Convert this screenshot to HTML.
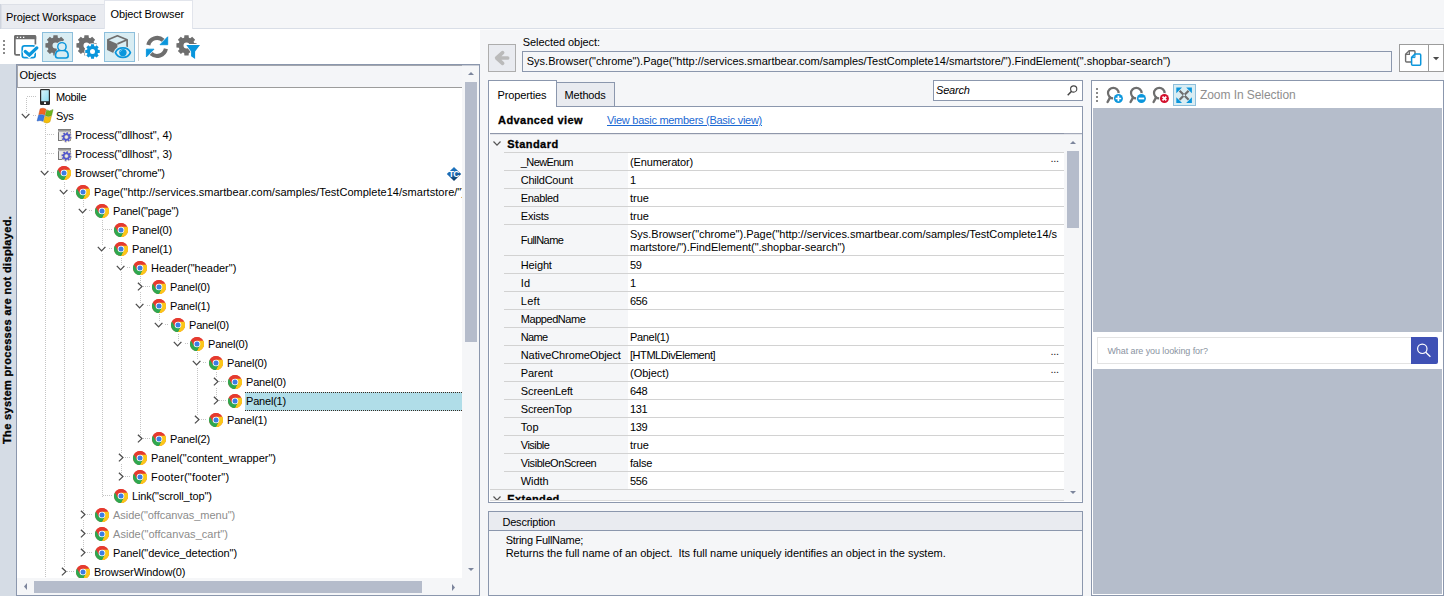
<!DOCTYPE html>
<html><head><meta charset="utf-8"><title>Object Browser</title><style>
html,body{margin:0;padding:0}
body{width:1444px;height:596px;overflow:hidden;background:#f5f6f8;font-family:"Liberation Sans", sans-serif;font-size:11px;color:#000;position:relative}
.a{position:absolute;box-sizing:border-box}
.t{position:absolute;white-space:pre}
svg{overflow:visible}
</style></head><body>
<div class="a" style="left:0px;top:28px;width:1444px;height:1px;background:#d9dee7;"></div>
<div class="a" style="left:480px;top:29px;width:964px;height:1px;background:#fcfcfd;"></div>
<div class="a" style="left:0px;top:29px;width:480px;height:35px;background:#fff;"></div>
<div class="a" style="left:1px;top:4px;width:104px;height:24px;background:#e9ebf0;border:1px solid #dde0e7;border-bottom:none;"></div>
<div class="a" style="left:104px;top:0px;width:89px;height:29px;background:#fff;border:1px solid #e2e5ec;border-bottom:none;"></div>
<div class="a" style="left:0px;top:4px;width:1px;height:25px;background:#cfd4de;"></div>
<span class="t" style="left:6px;top:11px;font-size:11px;line-height:13px;letter-spacing:-0.124px;">Project Workspace</span>
<span class="t" style="left:110.6px;top:8px;font-size:11px;line-height:13px;letter-spacing:-0.129px;">Object Browser</span>
<div class="a" style="left:3px;top:40px;width:2px;height:2px;background:#8a8a8a;"></div>
<div class="a" style="left:3px;top:44px;width:2px;height:2px;background:#8a8a8a;"></div>
<div class="a" style="left:3px;top:48px;width:2px;height:2px;background:#8a8a8a;"></div>
<div class="a" style="left:3px;top:52px;width:2px;height:2px;background:#8a8a8a;"></div>
<div class="a" style="left:42px;top:32px;width:31px;height:30px;background:#d9edf3;border:1px solid #8dbfdc;"></div>
<div class="a" style="left:104px;top:32px;width:31px;height:30px;background:#d9edf3;border:1px solid #8dbfdc;"></div>
<div class="a" style="left:138px;top:33px;width:1px;height:28px;background:#d0d0d0;"></div>
<svg class="a" style="left:14px;top:35px;" width="24" height="24" viewBox="0 0 24 24">
<path d="M0.85 19 V1.8 Q0.85 0.85 1.8 0.85 H20.4 Q21.4 0.85 21.4 1.8 V9.4" fill="none" stroke="#6e6e6e" stroke-width="1.7"/>
<path d="M0.2 1.6 Q0.2 0 1.8 0 H20.6 Q22.2 0 22.2 1.6 V4.2 H0.2Z" fill="#6e6e6e"/>
<rect x="2.8" y="1.7" width="1.3" height="1.3" fill="#fff"/><rect x="5.9" y="1.7" width="1.3" height="1.3" fill="#fff"/><rect x="9" y="1.7" width="1.3" height="1.3" fill="#fff"/>
<path d="M0.85 18.5 Q0.85 19.85 2.2 19.85 H6" stroke="#6e6e6e" stroke-width="1.7" fill="none"/>
<rect x="8.25" y="10.95" width="12.9" height="11.7" rx="2.2" fill="#fff" stroke="#0a96dc" stroke-width="1.7"/>
<path d="M11.3 16.6 L15.3 20 L22.8 12.9" fill="none" stroke="#fff" stroke-width="5.4" stroke-linecap="round"/>
<path d="M11.3 16.6 L15.3 20 L22.8 12.9" fill="none" stroke="#0a96dc" stroke-width="3.3" stroke-linecap="round" stroke-linejoin="miter"/>
</svg>
<svg class="a" style="left:45px;top:35px;" width="24" height="24" viewBox="0 0 24 24">
<path d="M12.85 18.05 L12.60 20.48 L8.40 20.48 L8.15 18.05 L6.75 17.47 L4.85 19.02 L1.88 16.05 L3.43 14.15 L2.85 12.75 L0.42 12.50 L0.42 8.30 L2.85 8.05 L3.43 6.65 L1.88 4.75 L4.85 1.78 L6.75 3.33 L8.15 2.75 L8.40 0.32 L12.60 0.32 L12.85 2.75 L14.25 3.33 L16.15 1.78 L19.12 4.75 L17.57 6.65 L18.15 8.05 L20.58 8.30 L20.58 12.50 L18.15 12.75 L17.57 14.15 L19.12 16.05 L16.15 19.02 L14.25 17.47Z M13.50 10.40 A3.0 3.0 0 1 0 7.50 10.40 A3.0 3.0 0 1 0 13.50 10.40Z" fill="#6e6e6e" fill-rule="evenodd"/>
<circle cx="16.95" cy="11.8" r="5.9" fill="#d9edf3"/>
<path d="M9.6 23.6 V20 Q9.6 14.4 15 14.4 H18.9 Q24.3 14.4 24.3 20 V23.6Z" fill="#d9edf3"/>
<circle cx="16.95" cy="11.8" r="4.1" fill="#d9edf3" stroke="#0a96dc" stroke-width="1.6"/>
<path d="M10.5 20.6 Q10.5 15.4 15.6 15.4 H18.1 Q23.2 15.4 23.2 20.6 Q23.2 23 20.8 23 H12.9 Q10.5 23 10.5 20.6Z" fill="#d9edf3" stroke="#0a96dc" stroke-width="1.6"/>
<circle cx="16.95" cy="11.8" r="3.3" fill="#d9edf3"/>
</svg>
<svg class="a" style="left:76px;top:35px;" width="24" height="24" viewBox="0 0 24 24">
<path d="M12.85 18.05 L12.60 20.48 L8.40 20.48 L8.15 18.05 L6.75 17.47 L4.85 19.02 L1.88 16.05 L3.43 14.15 L2.85 12.75 L0.42 12.50 L0.42 8.30 L2.85 8.05 L3.43 6.65 L1.88 4.75 L4.85 1.78 L6.75 3.33 L8.15 2.75 L8.40 0.32 L12.60 0.32 L12.85 2.75 L14.25 3.33 L16.15 1.78 L19.12 4.75 L17.57 6.65 L18.15 8.05 L20.58 8.30 L20.58 12.50 L18.15 12.75 L17.57 14.15 L19.12 16.05 L16.15 19.02 L14.25 17.47Z M13.50 10.40 A3.0 3.0 0 1 0 7.50 10.40 A3.0 3.0 0 1 0 13.50 10.40Z" fill="#6e6e6e" fill-rule="evenodd"/>
<circle cx="16.5" cy="16.4" r="8.2" fill="#fff"/>
<path d="M18.15 21.86 L18.00 23.65 L15.00 23.65 L14.85 21.86 L13.81 21.42 L12.44 22.58 L10.32 20.46 L11.48 19.09 L11.04 18.05 L9.25 17.90 L9.25 14.90 L11.04 14.75 L11.48 13.71 L10.32 12.34 L12.44 10.22 L13.81 11.38 L14.85 10.94 L15.00 9.15 L18.00 9.15 L18.15 10.94 L19.19 11.38 L20.56 10.22 L22.68 12.34 L21.52 13.71 L21.96 14.75 L23.75 14.90 L23.75 17.90 L21.96 18.05 L21.52 19.09 L22.68 20.46 L20.56 22.58 L19.19 21.42Z M19.00 16.40 A2.5 2.5 0 1 0 14.00 16.40 A2.5 2.5 0 1 0 19.00 16.40Z" fill="#0a96dc" fill-rule="evenodd"/>
</svg>
<svg class="a" style="left:107px;top:35px;" width="24" height="24" viewBox="0 0 24 24">
<path d="M0.9 4.8 L10.4 0.8 L20.1 4.8 V14.6 L10.4 19 L0.9 14.6Z" fill="none" stroke="#6e6e6e" stroke-width="1.7" stroke-linejoin="round"/>
<path d="M0.9 4.8 L10.4 8.9 V19 L0.9 14.6Z" fill="#6e6e6e"/>
<path d="M10.4 8.9 L20.1 4.8" stroke="#6e6e6e" stroke-width="1.7" fill="none"/>
<path d="M7.4 17.6 C10.4 10.2 21.4 10.2 24.4 17.6 C21.4 25 10.4 25 7.4 17.6Z" fill="#d9edf3" stroke="#d9edf3" stroke-width="2.2" stroke-linejoin="round"/>
<path d="M8.4 17.6 C11 11.3 20.8 11.3 23.4 17.6 C20.8 23.9 11 23.9 8.4 17.6Z" fill="#d9edf3" stroke="#0a96dc" stroke-width="1.7" stroke-linejoin="round"/>
<circle cx="15.9" cy="17.6" r="3.7" fill="#0a96dc"/>
<path d="M13.3 16.8 A2.8 2.8 0 0 1 15.4 14.8" fill="none" stroke="#7fcbf1" stroke-width="0.8"/>
</svg>
<svg class="a" style="left:145px;top:35px;" width="24" height="24" viewBox="0 0 24 24">
<path d="M3.3 10.03 A9 9 0 0 1 18.12 5.21" fill="none" stroke="#6e6e6e" stroke-width="4.1"/>
<path d="M20.9 13.77 A9 9 0 0 1 6.08 18.59" fill="none" stroke="#6e6e6e" stroke-width="4.1"/>
<path d="M22.7 1.8 V9.7 H15Z" fill="#0a96dc" stroke="#0a96dc" stroke-width="0.9" stroke-linejoin="round"/>
<path d="M1.4 21.9 V14.2 H9Z" fill="#0a96dc" stroke="#0a96dc" stroke-width="0.9" stroke-linejoin="round"/>
</svg>
<svg class="a" style="left:176px;top:35px;" width="24" height="24" viewBox="0 0 24 24">
<path d="M12.85 18.05 L12.60 20.48 L8.40 20.48 L8.15 18.05 L6.75 17.47 L4.85 19.02 L1.88 16.05 L3.43 14.15 L2.85 12.75 L0.42 12.50 L0.42 8.30 L2.85 8.05 L3.43 6.65 L1.88 4.75 L4.85 1.78 L6.75 3.33 L8.15 2.75 L8.40 0.32 L12.60 0.32 L12.85 2.75 L14.25 3.33 L16.15 1.78 L19.12 4.75 L17.57 6.65 L18.15 8.05 L20.58 8.30 L20.58 12.50 L18.15 12.75 L17.57 14.15 L19.12 16.05 L16.15 19.02 L14.25 17.47Z M13.50 10.40 A3.0 3.0 0 1 0 7.50 10.40 A3.0 3.0 0 1 0 13.50 10.40Z" fill="#6e6e6e" fill-rule="evenodd"/>
<path d="M8.6 8.9 H26 L20.2 17 V25.6 L14.2 21.4 V16.6Z" fill="#fff"/>
<path d="M10.3 9.9 H24 L19.1 16.4 V23.9 L15.1 21.2 V16.4Z" fill="#0a96dc"/>
</svg>
<div class="a" style="left:0px;top:64px;width:16px;height:532px;background:#d5dce5;"></div>
<div class="a" style="left:0;top:0;width:0;height:0"><span class="t" id="vt" style="left:0;top:0;font-weight:bold;-webkit-text-stroke:0.3px #000;font-size:11px;line-height:13px;transform-origin:0 0;transform:translate(0.6px,444px) rotate(-90deg);letter-spacing:0.35px">The system processes are not displayed.</span></div>
<div class="a" style="left:16px;top:64px;width:464px;height:532px;background:#fff;border:1px solid #8b97ad;"></div>
<div class="a" style="left:17px;top:65px;width:445px;height:23px;background:#f4f5f8;border:1px solid #a3a6ad;border-right:none;border-bottom:1px solid #9c9c9c;"></div>
<div class="a" style="left:462px;top:65px;width:17px;height:530px;background:#f5f6f8;"></div>
<div class="a" style="left:462px;top:65px;width:17px;height:1px;background:#c9cdd6;"></div>
<div class="a" style="left:17px;top:578px;width:445px;height:17px;background:#f5f6f8;"></div>
<span class="t" style="left:19.6px;top:69px;font-size:11px;line-height:13px;letter-spacing:-0.100px;">Objects</span>
<div class="a" style="left:465px;top:82px;width:12px;height:260px;background:#b5bccb;"></div>
<div class="a" style="left:34px;top:581px;width:388px;height:12px;background:#b5bccb;"></div>
<svg class="a" style="left:468px;top:72px;" width="6" height="3" viewBox="0 0 6 3"><path d="M0 3 L3 0 L6 3Z" fill="#7c859c"/></svg>
<svg class="a" style="left:468px;top:568px;" width="6" height="3" viewBox="0 0 6 3"><path d="M0 0 L3 3 L6 0Z" fill="#7c859c"/></svg>
<svg class="a" style="left:24px;top:583px;" width="3" height="7" viewBox="0 0 3 7"><path d="M3 0 L0 3.5 L3 7Z" fill="#7c859c"/></svg>
<svg class="a" style="left:452px;top:584px;" width="3" height="7" viewBox="0 0 3 7"><path d="M0 0 L3 3.5 L0 7Z" fill="#7c859c"/></svg>
<div class="a" style="left:17px;top:88px;width:445px;height:490px;overflow:hidden;background:#fff"><div class="a" style="left:-17px;top:-88px;width:0;height:0">
<div class="a" style="left:26px;top:98px;width:1px;height:19px;background:repeating-linear-gradient(to bottom,#c4c4c4 0 1px,transparent 1px 2px);"></div>
<div class="a" style="left:45px;top:124px;width:1px;height:454px;background:repeating-linear-gradient(to bottom,#c4c4c4 0 1px,transparent 1px 2px);"></div>
<div class="a" style="left:64px;top:182px;width:1px;height:391px;background:repeating-linear-gradient(to bottom,#c4c4c4 0 1px,transparent 1px 2px);"></div>
<div class="a" style="left:83px;top:200px;width:1px;height:354px;background:repeating-linear-gradient(to bottom,#c4c4c4 0 1px,transparent 1px 2px);"></div>
<div class="a" style="left:102px;top:220px;width:1px;height:277px;background:repeating-linear-gradient(to bottom,#c4c4c4 0 1px,transparent 1px 2px);"></div>
<div class="a" style="left:121px;top:258px;width:1px;height:220px;background:repeating-linear-gradient(to bottom,#c4c4c4 0 1px,transparent 1px 2px);"></div>
<div class="a" style="left:140px;top:276px;width:1px;height:164px;background:repeating-linear-gradient(to bottom,#c4c4c4 0 1px,transparent 1px 2px);"></div>
<div class="a" style="left:159px;top:314px;width:1px;height:12px;background:repeating-linear-gradient(to bottom,#c4c4c4 0 1px,transparent 1px 2px);"></div>
<div class="a" style="left:178px;top:334px;width:1px;height:11px;background:repeating-linear-gradient(to bottom,#c4c4c4 0 1px,transparent 1px 2px);"></div>
<div class="a" style="left:197px;top:352px;width:1px;height:69px;background:repeating-linear-gradient(to bottom,#c4c4c4 0 1px,transparent 1px 2px);"></div>
<div class="a" style="left:216px;top:372px;width:1px;height:30px;background:repeating-linear-gradient(to bottom,#c4c4c4 0 1px,transparent 1px 2px);"></div>
<div class="a" style="left:27px;top:96px;width:9px;height:1px;background:repeating-linear-gradient(to right,#c4c4c4 0 1px,transparent 1px 2px);"></div>
<svg class="a" style="left:40px;top:89px;" width="10" height="16" viewBox="0 0 10 16"><defs><linearGradient id="mg" x1="0" y1="0" x2="1" y2="1"><stop offset="0" stop-color="#d9f4fb"/><stop offset="1" stop-color="#8fdcf0"/></linearGradient></defs>
<rect x="0" y="0" width="10" height="16" rx="1.2" fill="#2b2b2b"/><rect x="1.2" y="1.2" width="7.6" height="11" fill="url(#mg)"/><rect x="4" y="13.2" width="2" height="1.8" fill="#fff"/></svg>
<span class="t" style="left:56px;top:91px;font-size:11px;line-height:13px;letter-spacing:-0.368px;">Mobile</span>
<div class="a" style="left:33px;top:115px;width:3px;height:1px;background:repeating-linear-gradient(to right,#c4c4c4 0 1px,transparent 1px 2px);"></div>
<div class="a" style="left:22px;top:113px;width:9px;height:7px;background:#fff;"></div>
<svg class="a" style="left:21px;top:113px;" width="10" height="7" viewBox="0 0 10 7"><path d="M0.8 0.9 L4.6 4.9 L8.4 0.9" fill="none" stroke="#4d4d4d" stroke-width="1.3"/></svg>
<svg class="a" style="left:37px;top:108px;" width="16" height="16" viewBox="0 0 16 16"><path d="M3.2 0.8 Q6 -0.6 9 1.2 L7.7 6.9 Q5 5.4 1.8 6.6Z" fill="#f26522" stroke="#c9481a" stroke-width="0.5"/>
<path d="M9.7 1.9 Q12.6 4 16 1.6 L14.6 7.4 Q11.4 9.6 8.3 7.5Z" fill="#6fb51e" stroke="#4f8a12" stroke-width="0.5"/>
<path d="M1.6 7.2 Q4.6 6 7.5 7.5 L6.1 13.3 Q3.2 11.8 0.1 13Z" fill="#3a78e0" stroke="#2a59b5" stroke-width="0.5"/>
<path d="M8.1 8.2 Q11 10.3 14.4 8 L13 13.8 Q10 16.2 6.7 14.1Z" fill="#f5bf0c" stroke="#c79606" stroke-width="0.5"/></svg>
<span class="t" style="left:56px;top:110px;font-size:11px;line-height:13px;letter-spacing:-0.315px;">Sys</span>
<div class="a" style="left:45px;top:134px;width:10px;height:1px;background:repeating-linear-gradient(to right,#c4c4c4 0 1px,transparent 1px 2px);"></div>
<svg class="a" style="left:58px;top:129px;" width="15" height="14" viewBox="0 0 15 14"><defs><linearGradient id="pg2" x1="0" y1="0" x2="0" y2="1"><stop offset="0" stop-color="#6f6f6f"/><stop offset="1" stop-color="#c8c8c8"/></linearGradient></defs>
<rect x="0.5" y="0.5" width="12" height="11" fill="#e9e9e9" stroke="#777"/><rect x="0" y="0" width="13" height="3.2" fill="url(#pg2)"/>
<path d="M12.28 7.56 L13.80 8.07 L13.40 10.03 L11.80 9.91 L11.45 10.43 L12.17 11.87 L10.50 12.98 L9.45 11.76 L8.84 11.88 L8.33 13.40 L6.37 13.00 L6.49 11.40 L5.97 11.05 L4.53 11.77 L3.42 10.10 L4.64 9.05 L4.52 8.44 L3.00 7.93 L3.40 5.97 L5.00 6.09 L5.35 5.57 L4.63 4.13 L6.30 3.02 L7.35 4.24 L7.96 4.12 L8.47 2.60 L10.43 3.00 L10.31 4.60 L10.83 4.95 L12.27 4.23 L13.38 5.90 L12.16 6.95Z M9.90 8.00 A1.5 1.5 0 1 0 6.90 8.00 A1.5 1.5 0 1 0 9.90 8.00Z" fill="#5358cd" stroke="#f6ecc0" stroke-width="0.7" fill-rule="evenodd"/></svg>
<span class="t" style="left:75px;top:129px;font-size:11px;line-height:13px;letter-spacing:-0.091px;">Process(&quot;dllhost&quot;, 4)</span>
<div class="a" style="left:45px;top:153px;width:10px;height:1px;background:repeating-linear-gradient(to right,#c4c4c4 0 1px,transparent 1px 2px);"></div>
<svg class="a" style="left:58px;top:148px;" width="15" height="14" viewBox="0 0 15 14"><defs><linearGradient id="pg3" x1="0" y1="0" x2="0" y2="1"><stop offset="0" stop-color="#6f6f6f"/><stop offset="1" stop-color="#c8c8c8"/></linearGradient></defs>
<rect x="0.5" y="0.5" width="12" height="11" fill="#e9e9e9" stroke="#777"/><rect x="0" y="0" width="13" height="3.2" fill="url(#pg3)"/>
<path d="M12.28 7.56 L13.80 8.07 L13.40 10.03 L11.80 9.91 L11.45 10.43 L12.17 11.87 L10.50 12.98 L9.45 11.76 L8.84 11.88 L8.33 13.40 L6.37 13.00 L6.49 11.40 L5.97 11.05 L4.53 11.77 L3.42 10.10 L4.64 9.05 L4.52 8.44 L3.00 7.93 L3.40 5.97 L5.00 6.09 L5.35 5.57 L4.63 4.13 L6.30 3.02 L7.35 4.24 L7.96 4.12 L8.47 2.60 L10.43 3.00 L10.31 4.60 L10.83 4.95 L12.27 4.23 L13.38 5.90 L12.16 6.95Z M9.90 8.00 A1.5 1.5 0 1 0 6.90 8.00 A1.5 1.5 0 1 0 9.90 8.00Z" fill="#5358cd" stroke="#f6ecc0" stroke-width="0.7" fill-rule="evenodd"/></svg>
<span class="t" style="left:75px;top:148px;font-size:11px;line-height:13px;letter-spacing:-0.091px;">Process(&quot;dllhost&quot;, 3)</span>
<div class="a" style="left:51px;top:172px;width:4px;height:1px;background:repeating-linear-gradient(to right,#c4c4c4 0 1px,transparent 1px 2px);"></div>
<div class="a" style="left:41px;top:170px;width:9px;height:7px;background:#fff;"></div>
<svg class="a" style="left:40px;top:170px;" width="10" height="7" viewBox="0 0 10 7"><path d="M0.8 0.9 L4.6 4.9 L8.4 0.9" fill="none" stroke="#4d4d4d" stroke-width="1.3"/></svg>
<svg class="a" style="left:57px;top:166px;" width="14" height="14" viewBox="0 0 14 14"><use href="#chr"/></svg>
<span class="t" style="left:75px;top:167px;font-size:11px;line-height:13px;letter-spacing:-0.140px;">Browser(&quot;chrome&quot;)</span>
<div class="a" style="left:71px;top:191px;width:3px;height:1px;background:repeating-linear-gradient(to right,#c4c4c4 0 1px,transparent 1px 2px);"></div>
<div class="a" style="left:60px;top:189px;width:9px;height:7px;background:#fff;"></div>
<svg class="a" style="left:59px;top:189px;" width="10" height="7" viewBox="0 0 10 7"><path d="M0.8 0.9 L4.6 4.9 L8.4 0.9" fill="none" stroke="#4d4d4d" stroke-width="1.3"/></svg>
<svg class="a" style="left:76px;top:185px;" width="14" height="14" viewBox="0 0 14 14"><use href="#chr"/></svg>
<span class="t" style="left:94px;top:186px;font-size:11px;line-height:13px;letter-spacing:0.026px;">Page(&quot;http://services.smartbear.com/samples/TestComplete14/smartstore/&quot;)</span>
<div class="a" style="left:89px;top:210px;width:4px;height:1px;background:repeating-linear-gradient(to right,#c4c4c4 0 1px,transparent 1px 2px);"></div>
<div class="a" style="left:79px;top:208px;width:9px;height:7px;background:#fff;"></div>
<svg class="a" style="left:78px;top:208px;" width="10" height="7" viewBox="0 0 10 7"><path d="M0.8 0.9 L4.6 4.9 L8.4 0.9" fill="none" stroke="#4d4d4d" stroke-width="1.3"/></svg>
<svg class="a" style="left:95px;top:204px;" width="14" height="14" viewBox="0 0 14 14"><use href="#chr"/></svg>
<span class="t" style="left:113px;top:205px;font-size:11px;line-height:13px;letter-spacing:-0.150px;">Panel(&quot;page&quot;)</span>
<div class="a" style="left:103px;top:229px;width:9px;height:1px;background:repeating-linear-gradient(to right,#c4c4c4 0 1px,transparent 1px 2px);"></div>
<svg class="a" style="left:114px;top:223px;" width="14" height="14" viewBox="0 0 14 14"><use href="#chr"/></svg>
<span class="t" style="left:132px;top:224px;font-size:11px;line-height:13px;letter-spacing:-0.197px;">Panel(0)</span>
<div class="a" style="left:109px;top:248px;width:3px;height:1px;background:repeating-linear-gradient(to right,#c4c4c4 0 1px,transparent 1px 2px);"></div>
<div class="a" style="left:98px;top:246px;width:9px;height:7px;background:#fff;"></div>
<svg class="a" style="left:97px;top:246px;" width="10" height="7" viewBox="0 0 10 7"><path d="M0.8 0.9 L4.6 4.9 L8.4 0.9" fill="none" stroke="#4d4d4d" stroke-width="1.3"/></svg>
<svg class="a" style="left:114px;top:242px;" width="14" height="14" viewBox="0 0 14 14"><use href="#chr"/></svg>
<span class="t" style="left:132px;top:243px;font-size:11px;line-height:13px;letter-spacing:-0.197px;">Panel(1)</span>
<div class="a" style="left:127px;top:267px;width:4px;height:1px;background:repeating-linear-gradient(to right,#c4c4c4 0 1px,transparent 1px 2px);"></div>
<div class="a" style="left:117px;top:265px;width:9px;height:7px;background:#fff;"></div>
<svg class="a" style="left:116px;top:265px;" width="10" height="7" viewBox="0 0 10 7"><path d="M0.8 0.9 L4.6 4.9 L8.4 0.9" fill="none" stroke="#4d4d4d" stroke-width="1.3"/></svg>
<svg class="a" style="left:133px;top:261px;" width="14" height="14" viewBox="0 0 14 14"><use href="#chr"/></svg>
<span class="t" style="left:151px;top:262px;font-size:11px;line-height:13px;letter-spacing:-0.011px;">Header(&quot;header&quot;)</span>
<div class="a" style="left:143px;top:286px;width:7px;height:1px;background:repeating-linear-gradient(to right,#c4c4c4 0 1px,transparent 1px 2px);"></div>
<div class="a" style="left:137px;top:283px;width:6px;height:9px;background:#fff;"></div>
<svg class="a" style="left:137px;top:282px;" width="7" height="10" viewBox="0 0 7 10"><path d="M0.9 0.8 L4.9 4.6 L0.9 8.4" fill="none" stroke="#4d4d4d" stroke-width="1.3"/></svg>
<svg class="a" style="left:152px;top:280px;" width="14" height="14" viewBox="0 0 14 14"><use href="#chr"/></svg>
<span class="t" style="left:170px;top:281px;font-size:11px;line-height:13px;letter-spacing:-0.197px;">Panel(0)</span>
<div class="a" style="left:147px;top:305px;width:3px;height:1px;background:repeating-linear-gradient(to right,#c4c4c4 0 1px,transparent 1px 2px);"></div>
<div class="a" style="left:136px;top:303px;width:9px;height:7px;background:#fff;"></div>
<svg class="a" style="left:135px;top:303px;" width="10" height="7" viewBox="0 0 10 7"><path d="M0.8 0.9 L4.6 4.9 L8.4 0.9" fill="none" stroke="#4d4d4d" stroke-width="1.3"/></svg>
<svg class="a" style="left:152px;top:299px;" width="14" height="14" viewBox="0 0 14 14"><use href="#chr"/></svg>
<span class="t" style="left:170px;top:300px;font-size:11px;line-height:13px;letter-spacing:-0.197px;">Panel(1)</span>
<div class="a" style="left:165px;top:324px;width:4px;height:1px;background:repeating-linear-gradient(to right,#c4c4c4 0 1px,transparent 1px 2px);"></div>
<div class="a" style="left:155px;top:322px;width:9px;height:7px;background:#fff;"></div>
<svg class="a" style="left:154px;top:322px;" width="10" height="7" viewBox="0 0 10 7"><path d="M0.8 0.9 L4.6 4.9 L8.4 0.9" fill="none" stroke="#4d4d4d" stroke-width="1.3"/></svg>
<svg class="a" style="left:171px;top:318px;" width="14" height="14" viewBox="0 0 14 14"><use href="#chr"/></svg>
<span class="t" style="left:189px;top:319px;font-size:11px;line-height:13px;letter-spacing:-0.197px;">Panel(0)</span>
<div class="a" style="left:185px;top:343px;width:3px;height:1px;background:repeating-linear-gradient(to right,#c4c4c4 0 1px,transparent 1px 2px);"></div>
<div class="a" style="left:174px;top:341px;width:9px;height:7px;background:#fff;"></div>
<svg class="a" style="left:173px;top:341px;" width="10" height="7" viewBox="0 0 10 7"><path d="M0.8 0.9 L4.6 4.9 L8.4 0.9" fill="none" stroke="#4d4d4d" stroke-width="1.3"/></svg>
<svg class="a" style="left:190px;top:337px;" width="14" height="14" viewBox="0 0 14 14"><use href="#chr"/></svg>
<span class="t" style="left:208px;top:338px;font-size:11px;line-height:13px;letter-spacing:-0.197px;">Panel(0)</span>
<div class="a" style="left:203px;top:362px;width:4px;height:1px;background:repeating-linear-gradient(to right,#c4c4c4 0 1px,transparent 1px 2px);"></div>
<div class="a" style="left:193px;top:360px;width:9px;height:7px;background:#fff;"></div>
<svg class="a" style="left:192px;top:360px;" width="10" height="7" viewBox="0 0 10 7"><path d="M0.8 0.9 L4.6 4.9 L8.4 0.9" fill="none" stroke="#4d4d4d" stroke-width="1.3"/></svg>
<svg class="a" style="left:209px;top:356px;" width="14" height="14" viewBox="0 0 14 14"><use href="#chr"/></svg>
<span class="t" style="left:227px;top:357px;font-size:11px;line-height:13px;letter-spacing:-0.197px;">Panel(0)</span>
<div class="a" style="left:219px;top:381px;width:7px;height:1px;background:repeating-linear-gradient(to right,#c4c4c4 0 1px,transparent 1px 2px);"></div>
<div class="a" style="left:213px;top:378px;width:6px;height:9px;background:#fff;"></div>
<svg class="a" style="left:213px;top:377px;" width="7" height="10" viewBox="0 0 7 10"><path d="M0.9 0.8 L4.9 4.6 L0.9 8.4" fill="none" stroke="#4d4d4d" stroke-width="1.3"/></svg>
<svg class="a" style="left:228px;top:375px;" width="14" height="14" viewBox="0 0 14 14"><use href="#chr"/></svg>
<span class="t" style="left:246px;top:376px;font-size:11px;line-height:13px;letter-spacing:-0.197px;">Panel(0)</span>
<div class="a" style="left:219px;top:400px;width:7px;height:1px;background:repeating-linear-gradient(to right,#c4c4c4 0 1px,transparent 1px 2px);"></div>
<div class="a" style="left:213px;top:397px;width:6px;height:9px;background:#fff;"></div>
<svg class="a" style="left:213px;top:396px;" width="7" height="10" viewBox="0 0 7 10"><path d="M0.9 0.8 L4.9 4.6 L0.9 8.4" fill="none" stroke="#4d4d4d" stroke-width="1.3"/></svg>
<svg class="a" style="left:228px;top:394px;" width="14" height="14" viewBox="0 0 14 14"><use href="#chr"/></svg>
<div class="a" style="left:245px;top:392px;width:217px;height:19px;background:#b0dde8;border-top:1px dotted #3b2a20;border-bottom:1px dotted #3b2a20;"></div>
<span class="t" style="left:246px;top:395px;font-size:11px;line-height:13px;letter-spacing:-0.197px;">Panel(1)</span>
<div class="a" style="left:201px;top:419px;width:6px;height:1px;background:repeating-linear-gradient(to right,#c4c4c4 0 1px,transparent 1px 2px);"></div>
<div class="a" style="left:194px;top:416px;width:6px;height:9px;background:#fff;"></div>
<svg class="a" style="left:194px;top:415px;" width="7" height="10" viewBox="0 0 7 10"><path d="M0.9 0.8 L4.9 4.6 L0.9 8.4" fill="none" stroke="#4d4d4d" stroke-width="1.3"/></svg>
<svg class="a" style="left:209px;top:413px;" width="14" height="14" viewBox="0 0 14 14"><use href="#chr"/></svg>
<span class="t" style="left:227px;top:414px;font-size:11px;line-height:13px;letter-spacing:-0.197px;">Panel(1)</span>
<div class="a" style="left:143px;top:438px;width:7px;height:1px;background:repeating-linear-gradient(to right,#c4c4c4 0 1px,transparent 1px 2px);"></div>
<div class="a" style="left:137px;top:435px;width:6px;height:9px;background:#fff;"></div>
<svg class="a" style="left:137px;top:434px;" width="7" height="10" viewBox="0 0 7 10"><path d="M0.9 0.8 L4.9 4.6 L0.9 8.4" fill="none" stroke="#4d4d4d" stroke-width="1.3"/></svg>
<svg class="a" style="left:152px;top:432px;" width="14" height="14" viewBox="0 0 14 14"><use href="#chr"/></svg>
<span class="t" style="left:170px;top:433px;font-size:11px;line-height:13px;letter-spacing:-0.197px;">Panel(2)</span>
<div class="a" style="left:125px;top:457px;width:6px;height:1px;background:repeating-linear-gradient(to right,#c4c4c4 0 1px,transparent 1px 2px);"></div>
<div class="a" style="left:118px;top:454px;width:6px;height:9px;background:#fff;"></div>
<svg class="a" style="left:118px;top:453px;" width="7" height="10" viewBox="0 0 7 10"><path d="M0.9 0.8 L4.9 4.6 L0.9 8.4" fill="none" stroke="#4d4d4d" stroke-width="1.3"/></svg>
<svg class="a" style="left:133px;top:451px;" width="14" height="14" viewBox="0 0 14 14"><use href="#chr"/></svg>
<span class="t" style="left:151px;top:452px;font-size:11px;line-height:13px;letter-spacing:-0.009px;">Panel(&quot;content_wrapper&quot;)</span>
<div class="a" style="left:125px;top:476px;width:6px;height:1px;background:repeating-linear-gradient(to right,#c4c4c4 0 1px,transparent 1px 2px);"></div>
<div class="a" style="left:118px;top:473px;width:6px;height:9px;background:#fff;"></div>
<svg class="a" style="left:118px;top:472px;" width="7" height="10" viewBox="0 0 7 10"><path d="M0.9 0.8 L4.9 4.6 L0.9 8.4" fill="none" stroke="#4d4d4d" stroke-width="1.3"/></svg>
<svg class="a" style="left:133px;top:470px;" width="14" height="14" viewBox="0 0 14 14"><use href="#chr"/></svg>
<span class="t" style="left:151px;top:471px;font-size:11px;line-height:13px;letter-spacing:0.202px;">Footer(&quot;footer&quot;)</span>
<div class="a" style="left:103px;top:495px;width:9px;height:1px;background:repeating-linear-gradient(to right,#c4c4c4 0 1px,transparent 1px 2px);"></div>
<svg class="a" style="left:114px;top:489px;" width="14" height="14" viewBox="0 0 14 14"><use href="#chr"/></svg>
<span class="t" style="left:132px;top:490px;font-size:11px;line-height:13px;letter-spacing:-0.150px;">Link(&quot;scroll_top&quot;)</span>
<div class="a" style="left:87px;top:514px;width:6px;height:1px;background:repeating-linear-gradient(to right,#c4c4c4 0 1px,transparent 1px 2px);"></div>
<div class="a" style="left:80px;top:511px;width:6px;height:9px;background:#fff;"></div>
<svg class="a" style="left:80px;top:510px;" width="7" height="10" viewBox="0 0 7 10"><path d="M0.9 0.8 L4.9 4.6 L0.9 8.4" fill="none" stroke="#4d4d4d" stroke-width="1.3"/></svg>
<svg class="a" style="left:95px;top:508px;" width="14" height="14" viewBox="0 0 14 14"><use href="#chr"/></svg>
<span class="t" style="left:113px;top:509px;font-size:11px;line-height:13px;color:#8c8c8c;letter-spacing:-0.042px;">Aside(&quot;offcanvas_menu&quot;)</span>
<div class="a" style="left:87px;top:533px;width:6px;height:1px;background:repeating-linear-gradient(to right,#c4c4c4 0 1px,transparent 1px 2px);"></div>
<div class="a" style="left:80px;top:530px;width:6px;height:9px;background:#fff;"></div>
<svg class="a" style="left:80px;top:529px;" width="7" height="10" viewBox="0 0 7 10"><path d="M0.9 0.8 L4.9 4.6 L0.9 8.4" fill="none" stroke="#4d4d4d" stroke-width="1.3"/></svg>
<svg class="a" style="left:95px;top:527px;" width="14" height="14" viewBox="0 0 14 14"><use href="#chr"/></svg>
<span class="t" style="left:113px;top:528px;font-size:11px;line-height:13px;color:#8c8c8c;letter-spacing:0.043px;">Aside(&quot;offcanvas_cart&quot;)</span>
<div class="a" style="left:87px;top:552px;width:6px;height:1px;background:repeating-linear-gradient(to right,#c4c4c4 0 1px,transparent 1px 2px);"></div>
<div class="a" style="left:80px;top:549px;width:6px;height:9px;background:#fff;"></div>
<svg class="a" style="left:80px;top:548px;" width="7" height="10" viewBox="0 0 7 10"><path d="M0.9 0.8 L4.9 4.6 L0.9 8.4" fill="none" stroke="#4d4d4d" stroke-width="1.3"/></svg>
<svg class="a" style="left:95px;top:546px;" width="14" height="14" viewBox="0 0 14 14"><use href="#chr"/></svg>
<span class="t" style="left:113px;top:547px;font-size:11px;line-height:13px;letter-spacing:-0.074px;">Panel(&quot;device_detection&quot;)</span>
<div class="a" style="left:67px;top:571px;width:7px;height:1px;background:repeating-linear-gradient(to right,#c4c4c4 0 1px,transparent 1px 2px);"></div>
<div class="a" style="left:61px;top:568px;width:6px;height:9px;background:#fff;"></div>
<svg class="a" style="left:61px;top:567px;" width="7" height="10" viewBox="0 0 7 10"><path d="M0.9 0.8 L4.9 4.6 L0.9 8.4" fill="none" stroke="#4d4d4d" stroke-width="1.3"/></svg>
<svg class="a" style="left:76px;top:565px;" width="14" height="14" viewBox="0 0 14 14"><use href="#chr"/></svg>
<span class="t" style="left:94px;top:566px;font-size:11px;line-height:13px;letter-spacing:-0.095px;">BrowserWindow(0)</span>
<svg class="a" style="left:447px;top:167px;" width="14" height="14" viewBox="0 0 14 14"><defs><linearGradient id="tcg" x1="0" y1="0" x2="0.3" y2="1"><stop offset="0" stop-color="#1e78c4"/><stop offset="0.6" stop-color="#1a68b0"/><stop offset="1" stop-color="#0b3a66"/></linearGradient></defs><path d="M7 0 L14.2 7 L7 14 L-0.2 7Z" fill="url(#tcg)"/><text x="1.7" y="9.9" font-size="8.4" font-weight="bold" fill="#fff" letter-spacing="-0.6" font-family="Liberation Sans, sans-serif">TC</text></svg>
</div></div>
<div class="a" style="left:488px;top:44px;width:28px;height:28px;background:#e9ebf0;border:1px solid #adadad;"></div>
<svg class="a" style="left:494px;top:50px;" width="16" height="16" viewBox="0 0 16 16"><path d="M8.6 2.7 L2.7 8 L8.6 13.3 M3.6 8 H13.6" fill="none" stroke="#bababa" stroke-width="3.7" stroke-linecap="round" stroke-linejoin="round"/></svg>
<span class="t" style="left:522.8px;top:36px;font-size:11px;line-height:13px;letter-spacing:-0.068px;">Selected object:</span>
<div class="a" style="left:522px;top:51px;width:870px;height:21px;background:#f5f6f8;border:1px solid #8b97ad;"></div>
<span class="t" style="left:526.8px;top:55px;font-size:11px;line-height:13px;letter-spacing:-0.012px;">Sys.Browser(&quot;chrome&quot;).Page(&quot;http://services.smartbear.com/samples/TestComplete14/smartstore/&quot;).FindElement(&quot;.shopbar-search&quot;)</span>
<div class="a" style="left:1399px;top:44px;width:45px;height:28px;background:#fff;border:1px solid #9c9c9c;"></div>
<div class="a" style="left:1428px;top:45px;width:1px;height:26px;background:#9c9c9c;"></div>
<svg class="a" style="left:1433px;top:57px;" width="6" height="4" viewBox="0 0 6 4"><path d="M0 0 H6.2 L3.1 3.3Z" fill="#4a4a4a"/></svg>
<svg class="a" style="left:1404px;top:49px;" width="20" height="18" viewBox="0 0 20 18"><path d="M1.6 5.2 L5.2 1.8 H10 Q11 1.8 11 2.8 V12 Q11 13 10 13 H2.6 Q1.6 13 1.6 12Z" fill="#fff" stroke="#6e6e6e" stroke-width="1.4"/><path d="M1.6 5.4 H5.4 V1.8" fill="none" stroke="#6e6e6e" stroke-width="1.2"/>
<path d="M7.6 8.4 L11 5 H15.7 Q16.7 5 16.7 6 V15.2 Q16.7 16.2 15.7 16.2 H8.6 Q7.6 16.2 7.6 15.2Z" fill="#fff" stroke="#0a96dc" stroke-width="1.5"/><path d="M7.6 8.6 H11 V5Z" fill="#0a96dc" fill-opacity="0.35" stroke="#0a96dc" stroke-width="1"/></svg>
<div class="a" style="left:488px;top:106px;width:595px;height:397px;background:#fff;border:1px solid #8b97ad;"></div>
<div class="a" style="left:557px;top:82px;width:58px;height:25px;background:#e9ebf0;border:1px solid #8b97ad;border-left:none;"></div>
<div class="a" style="left:488px;top:80px;width:69px;height:27px;background:#fff;border:1px solid #8b97ad;border-bottom:none;"></div>
<span class="t" style="left:497.6px;top:89px;font-size:11px;line-height:13px;letter-spacing:-0.134px;">Properties</span>
<span class="t" style="left:564.6px;top:89px;font-size:11px;line-height:13px;letter-spacing:-0.172px;">Methods</span>
<div class="a" style="left:933px;top:80px;width:150px;height:21px;background:#fff;border:1px solid #8b97ad;"></div>
<span class="t" style="left:936px;top:84px;font-size:11px;line-height:13px;font-style:italic;letter-spacing:-0.210px;">Search</span>
<svg class="a" style="left:1067px;top:85px;" width="11" height="11" viewBox="0 0 11 11"><circle cx="6.7" cy="4" r="3.1" fill="none" stroke="#444" stroke-width="1.1"/><path d="M4.6 6.2 L0.7 10.2" stroke="#444" stroke-width="1.5" fill="none"/></svg>
<span class="t" style="left:498.1px;top:114px;font-size:11px;line-height:13px;font-weight:bold;-webkit-text-stroke:0.3px #000;letter-spacing:0.409px;">Advanced view</span>
<span class="t" style="left:607px;top:114px;font-size:11px;line-height:13px;color:#1b69d3;letter-spacing:-0.278px;text-decoration:underline;">View basic members (Basic view)</span>
<div class="a" style="left:490px;top:133px;width:592px;height:1px;background:#a3a9b9;"></div>
<div class="a" style="left:490px;top:133px;width:574px;height:1px;background:#8f97aa;"></div>
<div class="a" style="left:490px;top:134px;width:592px;height:1px;background:#e3e5ea;"></div>
<div class="a" style="left:490px;top:135px;width:592px;height:367px;background:#f5f6f8;"></div>
<div class="a" style="left:628px;top:153px;width:436px;height:337px;background:#fff;"></div>
<svg class="a" style="left:493px;top:141px;" width="8" height="5" viewBox="0 0 8 5"><path d="M0.5 0.5 L4 4.2 L7.5 0.5" fill="none" stroke="#555" stroke-width="1.2"/></svg>
<span class="t" style="left:507.3px;top:138px;font-size:11px;line-height:13px;font-weight:bold;-webkit-text-stroke:0.3px #000;letter-spacing:0.452px;">Standard</span>
<div class="a" style="left:504px;top:152px;width:560px;height:1px;background:#d2d2d2;"></div>
<span class="t" style="left:630px;top:156px;font-size:11px;line-height:13px;letter-spacing:-0.150px;">(Enumerator)</span>
<span class="t" style="left:520.8px;top:156px;font-size:11px;line-height:13px;letter-spacing:-0.607px;">_NewEnum</span>
<span class="t" style="left:1050.6px;top:152px;font-size:11px;line-height:13px;color:#222;letter-spacing:-0.391px;">...</span>
<div class="a" style="left:504px;top:170px;width:560px;height:1px;background:#d2d2d2;"></div>
<span class="t" style="left:630px;top:174px;font-size:11px;line-height:13px;">1</span>
<span class="t" style="left:520.8px;top:174px;font-size:11px;line-height:13px;letter-spacing:-0.242px;">ChildCount</span>
<div class="a" style="left:504px;top:188px;width:560px;height:1px;background:#d2d2d2;"></div>
<span class="t" style="left:630px;top:192px;font-size:11px;line-height:13px;letter-spacing:0.008px;">true</span>
<span class="t" style="left:520.8px;top:192px;font-size:11px;line-height:13px;letter-spacing:-0.382px;">Enabled</span>
<div class="a" style="left:504px;top:206px;width:560px;height:1px;background:#d2d2d2;"></div>
<span class="t" style="left:630px;top:210px;font-size:11px;line-height:13px;letter-spacing:0.008px;">true</span>
<span class="t" style="left:520.8px;top:210px;font-size:11px;line-height:13px;letter-spacing:-0.224px;">Exists</span>
<div class="a" style="left:504px;top:224px;width:560px;height:1px;background:#d2d2d2;"></div>
<span class="t" style="left:630px;top:228px;font-size:11px;line-height:13px;letter-spacing:-0.020px;">Sys.Browser(&quot;chrome&quot;).Page(&quot;http://services.smartbear.com/samples/TestComplete14/s</span>
<span class="t" style="left:630px;top:241px;font-size:11px;line-height:13px;letter-spacing:-0.035px;">martstore/&quot;).FindElement(&quot;.shopbar-search&quot;)</span>
<span class="t" style="left:520.8px;top:234px;font-size:11px;line-height:13px;letter-spacing:-0.572px;">FullName</span>
<div class="a" style="left:504px;top:255px;width:560px;height:1px;background:#d2d2d2;"></div>
<span class="t" style="left:630px;top:259px;font-size:11px;line-height:13px;letter-spacing:-0.325px;">59</span>
<span class="t" style="left:520.8px;top:259px;font-size:11px;line-height:13px;letter-spacing:-0.133px;">Height</span>
<div class="a" style="left:504px;top:273px;width:560px;height:1px;background:#d2d2d2;"></div>
<span class="t" style="left:630px;top:277px;font-size:11px;line-height:13px;">1</span>
<span class="t" style="left:520.8px;top:277px;font-size:11px;line-height:13px;letter-spacing:0.256px;">Id</span>
<div class="a" style="left:504px;top:291px;width:560px;height:1px;background:#d2d2d2;"></div>
<span class="t" style="left:630px;top:295px;font-size:11px;line-height:13px;letter-spacing:-0.320px;">656</span>
<span class="t" style="left:520.8px;top:295px;font-size:11px;line-height:13px;letter-spacing:0.235px;">Left</span>
<div class="a" style="left:504px;top:309px;width:560px;height:1px;background:#d2d2d2;"></div>
<span class="t" style="left:520.8px;top:313px;font-size:11px;line-height:13px;letter-spacing:-0.449px;">MappedName</span>
<div class="a" style="left:504px;top:327px;width:560px;height:1px;background:#d2d2d2;"></div>
<span class="t" style="left:630px;top:331px;font-size:11px;line-height:13px;letter-spacing:-0.322px;">Panel(1)</span>
<span class="t" style="left:520.8px;top:331px;font-size:11px;line-height:13px;letter-spacing:-0.636px;">Name</span>
<div class="a" style="left:504px;top:345px;width:560px;height:1px;background:#d2d2d2;"></div>
<span class="t" style="left:630px;top:349px;font-size:11px;line-height:13px;letter-spacing:-0.444px;">[HTMLDivElement]</span>
<span class="t" style="left:520.8px;top:349px;font-size:11px;line-height:13px;letter-spacing:-0.116px;">NativeChromeObject</span>
<span class="t" style="left:1050.6px;top:345px;font-size:11px;line-height:13px;color:#222;letter-spacing:-0.391px;">...</span>
<div class="a" style="left:504px;top:363px;width:560px;height:1px;background:#d2d2d2;"></div>
<span class="t" style="left:630px;top:367px;font-size:11px;line-height:13px;letter-spacing:-0.016px;">(Object)</span>
<span class="t" style="left:520.8px;top:367px;font-size:11px;line-height:13px;letter-spacing:-0.070px;">Parent</span>
<span class="t" style="left:1050.6px;top:363px;font-size:11px;line-height:13px;color:#222;letter-spacing:-0.391px;">...</span>
<div class="a" style="left:504px;top:381px;width:560px;height:1px;background:#d2d2d2;"></div>
<span class="t" style="left:630px;top:385px;font-size:11px;line-height:13px;letter-spacing:-0.320px;">648</span>
<span class="t" style="left:520.8px;top:385px;font-size:11px;line-height:13px;letter-spacing:-0.120px;">ScreenLeft</span>
<div class="a" style="left:504px;top:399px;width:560px;height:1px;background:#d2d2d2;"></div>
<span class="t" style="left:630px;top:403px;font-size:11px;line-height:13px;letter-spacing:-0.320px;">131</span>
<span class="t" style="left:520.8px;top:403px;font-size:11px;line-height:13px;letter-spacing:-0.199px;">ScreenTop</span>
<div class="a" style="left:504px;top:417px;width:560px;height:1px;background:#d2d2d2;"></div>
<span class="t" style="left:630px;top:421px;font-size:11px;line-height:13px;letter-spacing:-0.320px;">139</span>
<span class="t" style="left:520.8px;top:421px;font-size:11px;line-height:13px;letter-spacing:0.017px;">Top</span>
<div class="a" style="left:504px;top:435px;width:560px;height:1px;background:#d2d2d2;"></div>
<span class="t" style="left:630px;top:439px;font-size:11px;line-height:13px;letter-spacing:0.008px;">true</span>
<span class="t" style="left:520.8px;top:439px;font-size:11px;line-height:13px;letter-spacing:-0.531px;">Visible</span>
<div class="a" style="left:504px;top:453px;width:560px;height:1px;background:#d2d2d2;"></div>
<span class="t" style="left:630px;top:457px;font-size:11px;line-height:13px;letter-spacing:-0.210px;">false</span>
<span class="t" style="left:520.8px;top:457px;font-size:11px;line-height:13px;letter-spacing:-0.416px;">VisibleOnScreen</span>
<div class="a" style="left:504px;top:471px;width:560px;height:1px;background:#d2d2d2;"></div>
<span class="t" style="left:630px;top:475px;font-size:11px;line-height:13px;letter-spacing:-0.320px;">556</span>
<span class="t" style="left:520.8px;top:475px;font-size:11px;line-height:13px;letter-spacing:-0.085px;">Width</span>
<div class="a" style="left:490px;top:489px;width:574px;height:1px;background:#d2d2d2;"></div>
<div class="a" style="left:490px;top:490px;width:574px;height:10px;overflow:hidden"><div class="a" style="left:-490px;top:-490px;width:0;height:0">
<svg class="a" style="left:493px;top:496px;" width="8" height="5" viewBox="0 0 8 5"><path d="M0.5 0.5 L4 4.2 L7.5 0.5" fill="none" stroke="#555" stroke-width="1.2"/></svg>
<span class="t" style="left:507.3px;top:493px;font-size:11px;line-height:13px;font-weight:bold;-webkit-text-stroke:0.3px #000;letter-spacing:0.361px;">Extended</span>
</div></div>
<div class="a" style="left:490px;top:500px;width:574px;height:1px;background:#dcdcdc;"></div>
<div class="a" style="left:489px;top:501px;width:593px;height:1px;background:#fff;"></div>
<div class="a" style="left:1067px;top:151px;width:12px;height:77px;background:#b5bccb;"></div>
<svg class="a" style="left:1070px;top:141px;" width="6" height="3" viewBox="0 0 6 3"><path d="M0 3 L3 0 L6 3Z" fill="#7c859c"/></svg>
<svg class="a" style="left:1070px;top:491px;" width="6" height="3" viewBox="0 0 6 3"><path d="M0 0 L3 3 L6 0Z" fill="#7c859c"/></svg>
<div class="a" style="left:488px;top:511px;width:595px;height:85px;background:#f5f6f8;border:1px solid #8b97ad;"></div>
<div class="a" style="left:489px;top:512px;width:593px;height:18px;background:#e9ebf0;"></div>
<div class="a" style="left:489px;top:530px;width:593px;height:1px;background:#8b97ad;"></div>
<span class="t" style="left:502.5px;top:516px;font-size:11px;line-height:13px;letter-spacing:-0.221px;">Description</span>
<span class="t" style="left:505.7px;top:534px;font-size:11px;line-height:13px;letter-spacing:-0.283px;">String FullName;</span>
<span class="t" style="left:505.7px;top:547px;font-size:11px;line-height:13px;letter-spacing:-0.022px;">Returns the full name of an object.  Its full name uniquely identifies an object in the system.</span>
<div class="a" style="left:1091px;top:80px;width:353px;height:516px;background:#fff;border:1px solid #8b97ad;"></div>
<div class="a" style="left:1093px;top:108px;width:349px;height:486px;background:#b5bdcb;"></div>
<div class="a" style="left:1096px;top:88px;width:2px;height:2px;background:#8a8a8a;"></div>
<div class="a" style="left:1096px;top:92px;width:2px;height:2px;background:#8a8a8a;"></div>
<div class="a" style="left:1096px;top:96px;width:2px;height:2px;background:#8a8a8a;"></div>
<div class="a" style="left:1096px;top:100px;width:2px;height:2px;background:#8a8a8a;"></div>
<svg class="a" style="left:1106px;top:87px;" width="17" height="17" viewBox="0 0 17 17"><circle cx="7.3" cy="6.1" r="5.3" fill="none" stroke="#6e6e6e" stroke-width="2.2"/><path d="M4 10.6 L1.6 15" stroke="#6e6e6e" stroke-width="2.4" stroke-linecap="round"/>
<circle cx="12.4" cy="11.5" r="5.4" fill="#fff"/><circle cx="12.4" cy="11.5" r="4.5" fill="#0a96dc"/><path d="M9.6 11.5 H15.2 M12.4 8.7 V14.3" stroke="#fff" stroke-width="1.7"/></svg>
<svg class="a" style="left:1129px;top:87px;" width="17" height="17" viewBox="0 0 17 17"><circle cx="7.3" cy="6.1" r="5.3" fill="none" stroke="#6e6e6e" stroke-width="2.2"/><path d="M4 10.6 L1.6 15" stroke="#6e6e6e" stroke-width="2.4" stroke-linecap="round"/>
<circle cx="12.4" cy="11.5" r="5.4" fill="#fff"/><circle cx="12.4" cy="11.5" r="4.5" fill="#0a96dc"/><path d="M9.6 11.5 H15.2" stroke="#fff" stroke-width="1.8"/></svg>
<svg class="a" style="left:1152px;top:87px;" width="17" height="17" viewBox="0 0 17 17"><circle cx="7.3" cy="6.1" r="5.3" fill="none" stroke="#6e6e6e" stroke-width="2.2"/><path d="M4 10.6 L1.6 15" stroke="#6e6e6e" stroke-width="2.4" stroke-linecap="round"/>
<circle cx="12.4" cy="11.5" r="5.4" fill="#fff"/><circle cx="12.4" cy="11.5" r="4.5" fill="#d3102d"/><path d="M10.5 9.6 L14.3 13.4 M14.3 9.6 L10.5 13.4" stroke="#fff" stroke-width="1.7"/></svg>
<div class="a" style="left:1173px;top:84px;width:23px;height:22px;background:#d9edf3;border:1px solid #8dbfdc;"></div>
<svg class="a" style="left:1176px;top:87px;" width="16" height="16" viewBox="0 0 16 16"><path d="M3.6 3.8 L12.6 12.8 M12.6 3.8 L3.6 12.8" stroke="#6e6e6e" stroke-width="2.3"/>
<rect x="7.2" y="7.4" width="1.8" height="1.8" fill="#d9edf3"/>
<path d="M0.3 0.6 H6 L0.3 6.3Z M15.9 0.6 V6.3 L10.2 0.6Z M0.3 16 V10.3 L6 16Z M15.9 16 H10.2 L15.9 10.3Z" fill="#0a96dc"/></svg>
<span class="t" style="left:1200px;top:88px;font-size:12px;line-height:14px;color:#8e8e8e;letter-spacing:-0.066px;">Zoom In Selection</span>
<div class="a" style="left:1093px;top:332px;width:349px;height:37px;background:#fff;"></div>
<div class="a" style="left:1097px;top:337px;width:315px;height:27px;background:#fff;border:1px solid #e3e3e3;"></div>
<span class="t" style="left:1107.4px;top:346px;font-size:9px;line-height:11px;color:#8b94a2;letter-spacing:-0.083px;">What are you looking for?</span>
<div class="a" style="left:1411px;top:337px;width:27px;height:27px;background:#3f51b5;border-radius:0 2px 2px 0;"></div>
<svg class="a" style="left:1411px;top:337px;" width="27" height="27" viewBox="0 0 27 27"><circle cx="11.3" cy="11.8" r="4.7" fill="none" stroke="#fff" stroke-width="1.2"/><path d="M14.7 15.2 L19.4 19.8" stroke="#fff" stroke-width="1.3"/></svg>
<svg width="0" height="0" style="position:absolute"><defs><g id="chr">
<circle cx="7" cy="7" r="7" fill="#e53a2f"/>
<path d="M7 7 L0.94 3.5 A7 7 0 0 0 7.3 14 L10.2 8.9Z" fill="#2fa84f"/>
<path d="M7 7 L13.06 3.5 A7 7 0 0 1 7.3 14 L10.6 7Z" fill="#fbc619"/>
<path d="M7 3.5 H13.06 A7 7 0 0 1 7.3 14 L10.2 8.6Z" fill="#fbc619"/>
<path d="M0.94 3.5 A7 7 0 0 1 13.06 3.5 H7 L3.9 8.8Z" fill="#e53a2f"/>
<circle cx="7" cy="7" r="3.3" fill="#fff"/><circle cx="7" cy="7" r="2.5" fill="#3b7de4"/>
</g></defs></svg>
</body></html>
